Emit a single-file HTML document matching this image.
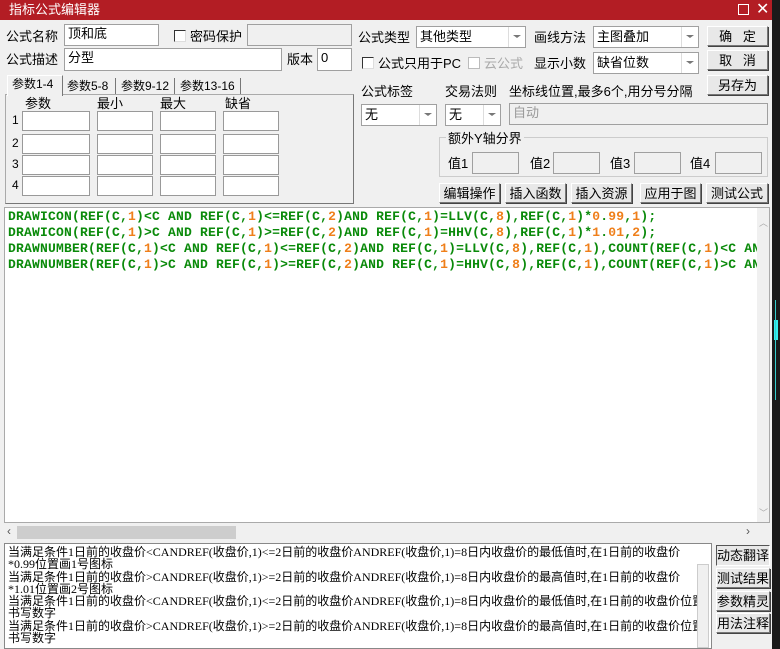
<!DOCTYPE html>
<html><head><meta charset="utf-8"><style>
*{box-sizing:border-box;margin:0;padding:0}
body{width:780px;height:649px;overflow:hidden;background:#1a1a1a;font-family:"Liberation Sans","Noto Sans CJK SC",sans-serif;font-size:13px;color:#000;position:relative}
.a{position:absolute}
#win{left:0;top:0;width:772px;height:649px;background:#f0f0f0}
#tb{left:0;top:0;width:772px;height:20px;background:#b31d24;color:#fff;font-size:13px;line-height:20px;padding-left:9px}
.inp{position:absolute;background:#fff;border:1px solid #a0a0a0;font-size:13px;line-height:18px;padding-left:3px}
.dis{background:#f0f0f0}
.lbl{position:absolute;font-size:13px;white-space:nowrap;margin-top:-2px}
.cb{position:absolute;width:12px;height:12px;background:#fff;border:1px solid #333;border-right-color:#ddd;border-bottom-color:#ddd}
.sel{position:absolute;background:#fff;border:1px solid #a0a0a0;font-size:13px;line-height:19px;padding-left:3px}
.sel:after{content:"";position:absolute;right:0;top:0;width:16px;height:100%;border-left:1px solid #ddd;background:#fff}
.sel i{position:absolute;right:4px;top:8px;width:0;height:0;border-left:4px solid transparent;border-right:4px solid transparent;border-top:3px solid #777;z-index:2}
.btn{position:absolute;background:#e8e8e8;border:1px solid #777;border-top-color:#fff;border-left-color:#fff;box-shadow:1px 1px 0 #444;text-align:center;font-size:13px;line-height:19px;white-space:nowrap}
.pi{position:absolute;background:#fff;border:1px solid #999;height:20px}
#code{left:4px;top:207px;width:766px;height:316px;background:#fff;border:1px solid #aaa;overflow:hidden}
#code pre{position:absolute;left:3px;top:1px;font-family:"Liberation Mono",monospace;font-weight:bold;font-size:13px;line-height:16px;color:#0a8a0a;letter-spacing:0.2px}
#code b{color:#ef7f1a}
#out{left:4px;top:543px;width:708px;height:106px;background:#fff;border:1px solid #888;overflow:hidden}
#out div{position:absolute;left:3px;top:2px;font-size:12px;line-height:12.3px;white-space:nowrap;font-family:"Liberation Serif","Noto Sans CJK SC",sans-serif;width:690px}
</style></head><body>
<div id="win" class="a">
<div id="tb" class="a">指标公式编辑器</div>
<div class="a" style="left:738px;top:4px;width:11px;height:11px;border:1px solid #fff"></div>
<div class="a" style="left:756px;top:0;color:#fff;font-size:16px;line-height:19px">✕</div>

<div class="lbl" style="left:6px;top:28px">公式名称</div>
<div class="inp" style="left:64px;top:24px;width:95px;height:22px">顶和底</div>
<div class="cb" style="left:174px;top:30px"></div>
<div class="lbl" style="left:190px;top:28px">密码保护</div>
<div class="inp dis" style="left:247px;top:24px;width:105px;height:22px"></div>
<div class="lbl" style="left:6px;top:51px">公式描述</div>
<div class="inp" style="left:64px;top:48px;width:218px;height:23px">分型</div>
<div class="lbl" style="left:287px;top:51px">版本</div>
<div class="inp" style="left:317px;top:48px;width:35px;height:23px">0</div>

<div class="a" style="left:5px;top:94px;width:349px;height:110px;border:1px solid #aaa;border-right-color:#777;border-bottom-color:#777"></div>
<div class="a" style="left:7px;top:75px;width:56px;height:21px;background:#f0f0f0;border:1px solid #fff;border-right-color:#777;border-bottom:none"></div>
<div class="lbl" style="left:12px;top:77px;font-size:12px">参数1-4</div>
<div class="lbl" style="left:67px;top:79px;font-size:12px">参数5-8</div>
<div class="a" style="left:115px;top:78px;width:1px;height:16px;background:#777"></div>
<div class="lbl" style="left:121px;top:79px;font-size:12px">参数9-12</div>
<div class="a" style="left:174px;top:78px;width:1px;height:16px;background:#777"></div>
<div class="lbl" style="left:180px;top:79px;font-size:12px">参数13-16</div>
<div class="a" style="left:240px;top:78px;width:1px;height:16px;background:#777"></div>
<div class="lbl" style="left:25px;top:95px">参数</div>
<div class="lbl" style="left:97px;top:95px">最小</div>
<div class="lbl" style="left:160px;top:95px">最大</div>
<div class="lbl" style="left:225px;top:95px">缺省</div>
<div class="lbl" style="left:12px;top:115px;font-size:12px">1</div>
<div class="lbl" style="left:12px;top:138px;font-size:12px">2</div>
<div class="lbl" style="left:12px;top:159px;font-size:12px">3</div>
<div class="lbl" style="left:12px;top:180px;font-size:12px">4</div>
<div class="pi" style="left:22px;top:111px;width:68px"></div><div class="pi" style="left:97px;top:111px;width:56px"></div><div class="pi" style="left:160px;top:111px;width:56px"></div><div class="pi" style="left:223px;top:111px;width:56px"></div>
<div class="pi" style="left:22px;top:134px;width:68px"></div><div class="pi" style="left:97px;top:134px;width:56px"></div><div class="pi" style="left:160px;top:134px;width:56px"></div><div class="pi" style="left:223px;top:134px;width:56px"></div>
<div class="pi" style="left:22px;top:155px;width:68px"></div><div class="pi" style="left:97px;top:155px;width:56px"></div><div class="pi" style="left:160px;top:155px;width:56px"></div><div class="pi" style="left:223px;top:155px;width:56px"></div>
<div class="pi" style="left:22px;top:176px;width:68px"></div><div class="pi" style="left:97px;top:176px;width:56px"></div><div class="pi" style="left:160px;top:176px;width:56px"></div><div class="pi" style="left:223px;top:176px;width:56px"></div>

<div class="lbl" style="left:358px;top:29px">公式类型</div>
<div class="sel" style="left:416px;top:26px;width:110px;height:22px">其他类型<i></i></div>
<div class="lbl" style="left:534px;top:29px">画线方法</div>
<div class="sel" style="left:593px;top:26px;width:106px;height:22px">主图叠加<i></i></div>
<div class="btn" style="left:707px;top:26px;width:61px;height:20px">确&nbsp;&nbsp;&nbsp;定</div>
<div class="btn" style="left:707px;top:50px;width:61px;height:20px">取&nbsp;&nbsp;&nbsp;消</div>
<div class="btn" style="left:707px;top:75px;width:61px;height:20px">另存为</div>
<div class="cb" style="left:362px;top:57px"></div>
<div class="lbl" style="left:378px;top:55px">公式只用于PC</div>
<div class="cb" style="left:468px;top:57px;border-color:#bbb"></div>
<div class="lbl" style="left:484px;top:55px;color:#aaa">云公式</div>
<div class="lbl" style="left:534px;top:55px">显示小数</div>
<div class="sel" style="left:593px;top:52px;width:106px;height:22px">缺省位数<i></i></div>
<div class="lbl" style="left:361px;top:83px">公式标签</div>
<div class="lbl" style="left:445px;top:83px">交易法则</div>
<div class="lbl" style="left:509px;top:83px">坐标线位置,最多6个,用分号分隔</div>
<div class="sel" style="left:361px;top:104px;width:76px;height:22px">无<i></i></div>
<div class="sel" style="left:445px;top:104px;width:56px;height:22px">无<i></i></div>
<div class="inp dis" style="left:509px;top:103px;width:259px;height:22px;color:#999">自动</div>
<div class="a" style="left:439px;top:137px;width:329px;height:40px;border:1px solid #ccc"></div>
<div class="lbl" style="left:446px;top:130px;background:#f0f0f0;padding:0 2px">额外Y轴分界</div>
<div class="lbl" style="left:448px;top:155px">值1</div><div class="inp dis" style="left:472px;top:152px;width:47px;height:22px"></div>
<div class="lbl" style="left:530px;top:155px">值2</div><div class="inp dis" style="left:553px;top:152px;width:47px;height:22px"></div>
<div class="lbl" style="left:610px;top:155px">值3</div><div class="inp dis" style="left:634px;top:152px;width:47px;height:22px"></div>
<div class="lbl" style="left:690px;top:155px">值4</div><div class="inp dis" style="left:715px;top:152px;width:47px;height:22px"></div>
<div class="btn" style="left:439px;top:183px;width:61px;height:20px">编辑操作</div>
<div class="btn" style="left:505px;top:183px;width:61px;height:20px">插入函数</div>
<div class="btn" style="left:571px;top:183px;width:61px;height:20px">插入资源</div>
<div class="btn" style="left:640px;top:183px;width:61px;height:20px">应用于图</div>
<div class="btn" style="left:706px;top:183px;width:62px;height:20px">测试公式</div>

<div id="code" class="a">
<pre>DRAWICON(REF(C,<b>1</b>)&lt;C AND REF(C,<b>1</b>)&lt;=REF(C,<b>2</b>)AND REF(C,<b>1</b>)=LLV(C,<b>8</b>),REF(C,<b>1</b>)*<b>0</b>.<b>99</b>,<b>1</b>);
DRAWICON(REF(C,<b>1</b>)&gt;C AND REF(C,<b>1</b>)&gt;=REF(C,<b>2</b>)AND REF(C,<b>1</b>)=HHV(C,<b>8</b>),REF(C,<b>1</b>)*<b>1</b>.<b>01</b>,<b>2</b>);
DRAWNUMBER(REF(C,<b>1</b>)&lt;C AND REF(C,<b>1</b>)&lt;=REF(C,<b>2</b>)AND REF(C,<b>1</b>)=LLV(C,<b>8</b>),REF(C,<b>1</b>),COUNT(REF(C,<b>1</b>)&lt;C AN
DRAWNUMBER(REF(C,<b>1</b>)&gt;C AND REF(C,<b>1</b>)&gt;=REF(C,<b>2</b>)AND REF(C,<b>1</b>)=HHV(C,<b>8</b>),REF(C,<b>1</b>),COUNT(REF(C,<b>1</b>)&gt;C AN</pre>
<div class="a" style="left:752px;top:0;width:13px;height:314px;background:#f0f0f0"></div>
<div class="a" style="left:754px;top:8px;color:#aaa;font-size:9px">︿</div>
<div class="a" style="left:754px;top:298px;color:#aaa;font-size:9px">﹀</div>
</div>
<div class="a" style="left:4px;top:523px;width:766px;height:18px;background:#f0f0f0"></div>
<div class="a" style="left:17px;top:526px;width:219px;height:13px;background:#cdcdcd"></div>
<div class="a" style="left:7px;top:524px;color:#555;font-size:12px">‹</div>
<div class="a" style="left:746px;top:524px;color:#555;font-size:12px">›</div>

<div id="out" class="a"><div>当满足条件1日前的收盘价&lt;CANDREF(收盘价,1)&lt;=2日前的收盘价ANDREF(收盘价,1)=8日内收盘价的最低值时,在1日前的收盘价<br>*0.99位置画1号图标<br>当满足条件1日前的收盘价&gt;CANDREF(收盘价,1)&gt;=2日前的收盘价ANDREF(收盘价,1)=8日内收盘价的最高值时,在1日前的收盘价<br>*1.01位置画2号图标<br>当满足条件1日前的收盘价&lt;CANDREF(收盘价,1)&lt;=2日前的收盘价ANDREF(收盘价,1)=8日内收盘价的最低值时,在1日前的收盘价位置<br>书写数字<br>当满足条件1日前的收盘价&gt;CANDREF(收盘价,1)&gt;=2日前的收盘价ANDREF(收盘价,1)=8日内收盘价的最高值时,在1日前的收盘价位置<br>书写数字</div>
<div class="a" style="left:692px;top:20px;width:12px;height:84px;background:#f0f0f0;border:1px solid #ccc"></div>
</div>
<div class="btn" style="left:716px;top:545px;width:54px;height:21px;border-color:#555 #fff #fff #555;box-shadow:none">动态翻译</div>
<div class="btn" style="left:716px;top:568px;width:54px;height:20px">测试结果</div>
<div class="btn" style="left:716px;top:591px;width:54px;height:20px">参数精灵</div>
<div class="btn" style="left:716px;top:613px;width:54px;height:20px">用法注释</div>
</div>
<div class="a" style="left:774px;top:320px;width:4px;height:20px;background:#3ee"></div>
<div class="a" style="left:775px;top:300px;width:1px;height:100px;background:#3cc"></div>
</body></html>
